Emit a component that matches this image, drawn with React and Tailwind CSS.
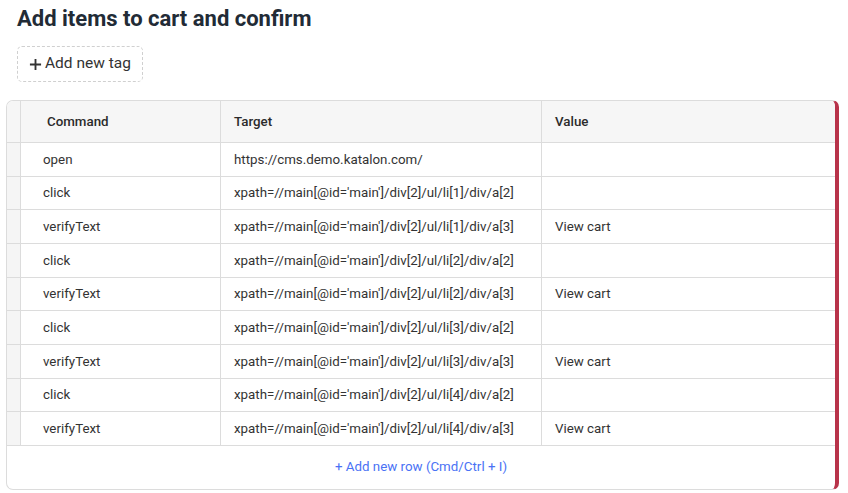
import React from "react";

const rows = [
  { command: "open", target: "https://cms.demo.katalon.com/", value: "" },
  { command: "click", target: "xpath=//main[@id='main']/div[2]/ul/li[1]/div/a[2]", value: "" },
  { command: "verifyText", target: "xpath=//main[@id='main']/div[2]/ul/li[1]/div/a[3]", value: "View cart" },
  { command: "click", target: "xpath=//main[@id='main']/div[2]/ul/li[2]/div/a[2]", value: "" },
  { command: "verifyText", target: "xpath=//main[@id='main']/div[2]/ul/li[2]/div/a[3]", value: "View cart" },
  { command: "click", target: "xpath=//main[@id='main']/div[2]/ul/li[3]/div/a[2]", value: "" },
  { command: "verifyText", target: "xpath=//main[@id='main']/div[2]/ul/li[3]/div/a[3]", value: "View cart" },
  { command: "click", target: "xpath=//main[@id='main']/div[2]/ul/li[4]/div/a[2]", value: "" },
  { command: "verifyText", target: "xpath=//main[@id='main']/div[2]/ul/li[4]/div/a[3]", value: "View cart" },
];

const grid = "grid grid-cols-[14px_200px_321px_1fr]";

export default function App() {
  return (
    <div className="bg-white min-h-screen font-['Roboto',sans-serif] text-[#333]">
      <div className="px-[17px] pt-[4px]">
        <h1 className="text-[22px] leading-[30px] font-bold text-[#222b36]">
          Add items to cart and confirm
        </h1>
        <button className="mt-[12px] h-[36px] px-[11px] flex items-center gap-[2px] border border-dashed border-[#d0d0d0] rounded-[5px] text-[15.5px] text-[#333]">
          <svg width="13" height="13" viewBox="0 0 14 14" className="mr-[1px]">
            <path d="M7 1v12M1 7h12" stroke="#333" strokeWidth="2" />
          </svg>
          Add new tag
        </button>
      </div>

      <div className="mt-[18px] ml-[6px] mr-[9px] border border-[#dcdcdc] border-r-[4px] border-r-[#b8334a] rounded-[7px] overflow-hidden">
        <div className={`${grid} h-[42px] bg-[#f6f6f6] border-b border-[#dcdcdc] text-[13.33px] font-medium text-[#2b2b2b]`}>
          <div className="border-r border-[#dcdcdc]" />
          <div className="border-r border-[#dcdcdc] flex items-center pl-[26px]">Command</div>
          <div className="border-r border-[#dcdcdc] flex items-center pl-[13px]">Target</div>
          <div className="flex items-center pl-[13px]">Value</div>
        </div>
        {rows.map((r, i) => (
          <div
            key={i}
            className={`${grid} h-[33.67px] border-b border-[#dcdcdc] text-[13.33px] text-[#333]`}
          >
            <div className="bg-[#f5f5f5] border-r border-[#dcdcdc]" />
            <div className="border-r border-[#dcdcdc] flex items-center pl-[22px] pt-[1px]">{r.command}</div>
            <div className="border-r border-[#dcdcdc] flex items-center pl-[13px] pt-[1px]">{r.target}</div>
            <div className="flex items-center pl-[13px] pt-[1px]">{r.value}</div>
          </div>
        ))}
        <div className="h-[43px] flex items-center justify-center text-[13.33px] text-[#4a72f5]">
          + Add new row (Cmd/Ctrl + I)
        </div>
      </div>
    </div>
  );
}
